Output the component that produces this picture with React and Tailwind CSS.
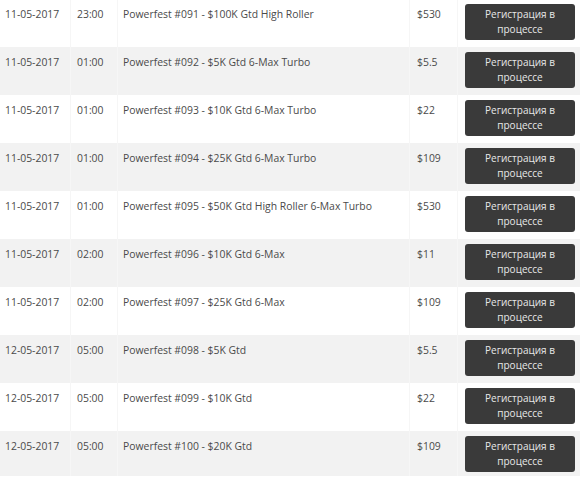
const rows = [
  ["11-05-2017", "23:00", "Powerfest #091 - $100K Gtd High Roller", "$530"],
  ["11-05-2017", "01:00", "Powerfest #092 - $5K Gtd 6-Max Turbo", "$5.5"],
  ["11-05-2017", "01:00", "Powerfest #093 - $10K Gtd 6-Max Turbo", "$22"],
  ["11-05-2017", "01:00", "Powerfest #094 - $25K Gtd 6-Max Turbo", "$109"],
  ["11-05-2017", "01:00", "Powerfest #095 - $50K Gtd High Roller 6-Max Turbo", "$530"],
  ["11-05-2017", "02:00", "Powerfest #096 - $10K Gtd 6-Max", "$11"],
  ["11-05-2017", "02:00", "Powerfest #097 - $25K Gtd 6-Max", "$109"],
  ["12-05-2017", "05:00", "Powerfest #098 - $5K Gtd", "$5.5"],
  ["12-05-2017", "05:00", "Powerfest #099 - $10K Gtd", "$22"],
  ["12-05-2017", "05:00", "Powerfest #100 - $20K Gtd", "$109"],
];

export default function App() {
  return (
    <div className="w-[580px] h-[477px] overflow-hidden bg-white text-[10.4px] text-[#4a4a4a] font-['Open_Sans',sans-serif] -mt-[1px]">
      {rows.map((r, i) => (
        <div
          key={i}
          className={`grid grid-cols-[71px_47px_292px_48px_1fr] h-[48px] ${i % 2 === 1 ? "bg-[#f2f2f2]" : "bg-white"}`}
        >
          <div className="pl-[5px] pt-[8px] leading-[14px] border-r border-[#f6f6f6]">{r[0]}</div>
          <div className="pl-[6px] pt-[8px] leading-[14px] border-r border-[#f6f6f6]">{r[1]}</div>
          <div className="pl-[5px] pt-[8px] leading-[14px] border-r border-[#f6f6f6]">{r[2]}</div>
          <div className="pl-[7px] pt-[8px] leading-[14px] border-r border-[#f6f6f6]">{r[3]}</div>
          <div className="pl-[7px] pt-[5px]">
            <div className="w-[110px] h-[36px] rounded-[3px] bg-[#3a3a3a] text-[#e8e8e8] text-[10px] text-center leading-[15px] pt-[3px]">
              Регистрация в<br />процессе
            </div>
          </div>
        </div>
      ))}
    </div>
  );
}
